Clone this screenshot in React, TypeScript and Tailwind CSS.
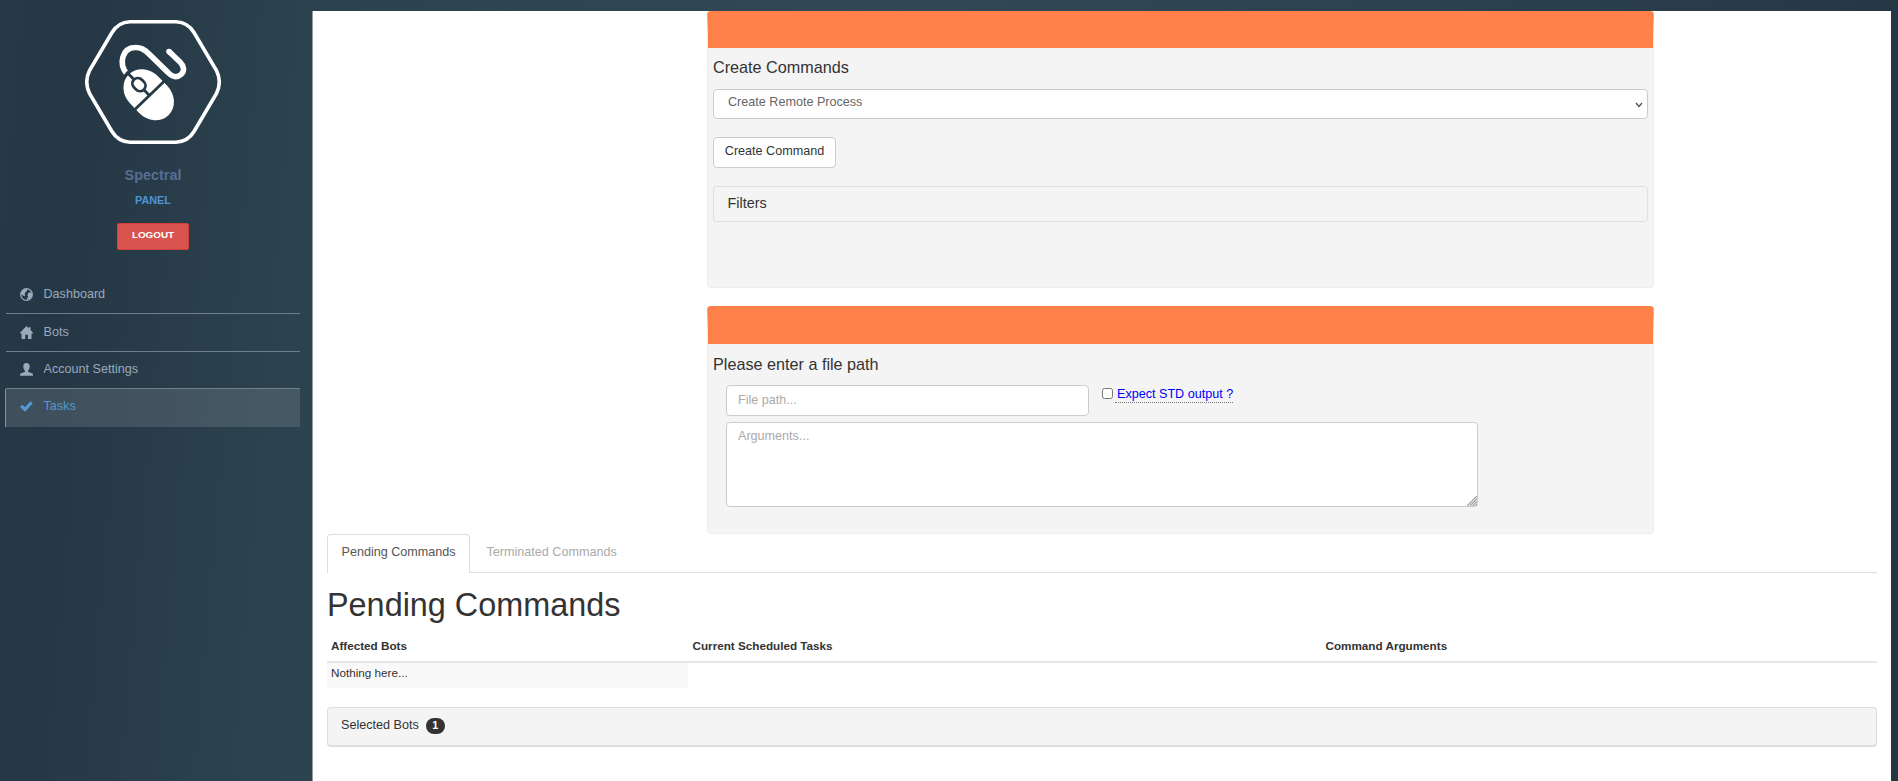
import React from "react";

const GlobeIcon = () => (
  <svg viewBox="0 0 13 13" className="h-[13px] w-[13px]">
    <circle cx="6.5" cy="6.5" r="5.8" fill="none" stroke="currentColor" strokeWidth="1.3" />
    <path fill="currentColor" d="M.8 6 1.500 3.200 4.500.8 7.600.9 6.800 2.200 7.200 3.100 5.400 4.300 4.600 5.700 5.200 7 4.600 8.200 2.500 7.200Z M7.700 5.800 9.200 4.500 10.900 4.300 12.200 6 11.800 8.400 9.900 11 7.400 11.900 6.800 10.600 8.200 9.200 7.600 7.800Z" />
  </svg>
);

const HomeIcon = () => (
  <svg viewBox="0 0 13 13" className="h-[13px] w-[13px]">
    <path fill="currentColor" d="M6.500 0 9 2.500V1.100h1.500V4L13 6.800l-.3.8h-1.200V13H8V8.800H5.200V13H1.500V7.600H.3L0 6.800Z" />
  </svg>
);

const UserIcon = () => (
  <svg viewBox="0 0 13 13" className="h-[13px] w-[13px]">
    <path fill="currentColor" d="M6.500 0C8.700 0 9.700 1.300 9.700 3.300c0 1.900-.8 3.800-1.700 4.600v.9l3.800 1.400c.8.300 1.200.8 1.200 1.500v1.100H0v-1.100c0-.7.4-1.200 1.200-1.500L5 8.800v-.9C4.100 7.100 3.300 5.200 3.300 3.300 3.300 1.300 4.300 0 6.500 0Z" />
  </svg>
);

const CheckIcon = () => (
  <svg viewBox="0 0 13 13" className="h-[13px] w-[13px]">
    <path fill="currentColor" d="M10.400 1.300 12.700 3.400 5.100 11.700 0 6.900 2.200 4.800 5 7.300Z" />
  </svg>
);

const ResizeGrip = () => (
  <svg viewBox="0 0 11 11" className="absolute right-px bottom-px h-[10px] w-[10px]" stroke="#999" strokeWidth="1.2">
    <path d="M0 11 11 0M3 11 11 3M6 11 11 6M9 11 11 9" />
  </svg>
);

const Logo = () => (
  <svg viewBox="0 0 136 124" className="h-[124px] w-[136px]" fill="none" stroke="white">
    <path strokeWidth="3.600" d="M45 1.800H91Q103 2.500 109 12.500L131.500 50.500Q137 62 131.500 73.500L109 111.500Q103 121.500 91 122.200H45Q33 121.500 27 111.500L4.500 73.500Q-1 62 4.500 50.500L27 12.500Q33 2.500 45 1.800Z" />
    <path strokeWidth="5.600" d="M41 53C34 43 37 28 50 27.500C56 27 60 30 63 33L83 52.500C87 57 92 58 96 54.500C100 51 99 46 95 42L84 31.500" />
    <circle cx="84" cy="31.500" r="2.800" fill="white" stroke="none" />
    <g transform="translate(63.700 74.700) rotate(-44)">
      <rect x="-19.500" y="-28.500" width="39" height="57" rx="19.500" ry="22" fill="white" stroke="none" />
      <path stroke="#263946" strokeWidth="2.800" d="M-22 1H22M0-32V1" />
      <rect x="-5.500" y="-21" width="11" height="14" rx="5.500" fill="white" stroke="#263946" strokeWidth="2.800" />
    </g>
  </svg>
);

const navItems = [
  { label: "Dashboard", icon: GlobeIcon, active: false },
  { label: "Bots", icon: HomeIcon, active: false },
  { label: "Account Settings", icon: UserIcon, active: false },
  { label: "Tasks", icon: CheckIcon, active: true },
];

function Sidebar() {
  return (
    <aside className="flex w-[312px] shrink-0 flex-col pt-[20px]">
      <div className="flex w-[306px] flex-col items-center">
        <Logo />
        <div className="mt-[21px] text-[14.4px] leading-[20px] font-bold text-[#566f93]">Spectral</div>
        <div className="mt-[5px] text-[10.8px] leading-[20px] font-bold text-[#4f94d4]">PANEL</div>
        <button className="mt-[13px] h-[27px] w-[72px] rounded-[2px] border border-[#d43f3a] bg-[#d9534f] pb-[2px] text-[9.9px] font-bold text-white">
          LOGOUT
        </button>
      </div>
      <nav className="mt-[26.500px] ml-[5px] w-[295px]">
        {navItems.map(({ label, icon: Icon, active }) => (
          <a
            key={label}
            className={
              active
                ? "flex h-[37.500px] items-center gap-[10.500px] border-l border-[#5a9bd8] bg-white/12 pb-[2px] pl-[14px] text-[#5499d6]"
                : "ml-px flex h-[37.500px] items-center gap-[10.500px] border-b border-[#6f7f8a] pl-[14px] text-[#9aa9bb]"
            }
          >
            <Icon />
            <span className="text-[12.6px]">{label}</span>
          </a>
        ))}
      </nav>
    </aside>
  );
}

function Panel({ title, className, children }: { title: string; className: string; children: React.ReactNode }) {
  return (
    <section
      className={
        "ml-[394px] w-[947px] rounded-[4px] border border-[#ededed] border-t-[#ff8049] bg-[#f4f4f4] px-[5px] " +
        className
      }
    >
      <h4 className="text-[16.2px] leading-[20px]">{title}</h4>
      {children}
    </section>
  );
}

function CommandTable() {
  return (
    <table className="w-full table-fixed border-collapse text-[11.7px]">
      <thead>
        <tr className="h-[34px] border-b-2 border-[#e6e6e6] text-left">
          <th className="w-[361px] pt-[2px] pl-[4px]">Affected Bots</th>
          <th className="w-[633px] pt-[2px] pl-[4.500px]">Current Scheduled Tasks</th>
          <th className="pt-[2px] pl-[4.500px]">Command Arguments</th>
        </tr>
      </thead>
      <tbody>
        <tr className="h-[26px]">
          <td className="bg-[#f9f9f9] pb-[5px] pl-[4px]">Nothing here...</td>
        </tr>
      </tbody>
    </table>
  );
}

export default function App() {
  return (
    <div className="flex h-[781px] w-full overflow-hidden bg-[#2a404d] bg-[linear-gradient(95deg,#263946_0%,#253745_4%,#283b49_9%,#2c434f_16%,#304955_45%,#2c4350_70%,#253643_100%)] font-['Liberation_Sans',Arial,sans-serif] text-[12.6px] text-[#333]">
      <Sidebar />
      <main className="mt-[11px] w-[1579px] border-l border-[#8e9aa1] bg-white">
        <Panel title="Create Commands" className="h-[277px] border-t-[37px] pt-[9px]">
          <div className="relative mt-[12px] h-[30px]">
            <select className="block h-[30px] w-full appearance-none rounded-[4px] border border-[#ccc] bg-white pb-[3px] pl-[14px] text-[12.6px] text-[#666]">
              <option>Create Remote Process</option>
            </select>
            <svg viewBox="0 0 8 6" className="absolute top-[13px] right-[5px] h-[6px] w-[8px]" fill="none" stroke="#555" strokeWidth="1.400">
              <path d="M1 1 4 4.400 7 1" />
            </svg>
          </div>
          <button className="mt-[18px] block h-[31px] w-[123px] rounded-[4px] border border-[#ccc] bg-white pb-[3px] text-[12.6px]">
            Create Command
          </button>
          <div className="mt-[18px] h-[36px] rounded-[3px] border border-[#e0e0e0] pt-[6px] pl-[13.500px] text-[14.4px] leading-[20px]">
            Filters
          </div>
        </Panel>
        <Panel title="Please enter a file path" className="mt-[18px] h-[228px] border-t-[38px] pt-[10px]">
          <div className="mt-[11px] ml-[13px] flex items-start">
            <input
              placeholder="File path..."
              className="h-[31px] w-[363px] rounded-[4px] border border-[#ccc] bg-white px-[11px] pb-[2px] text-[12.6px] placeholder:text-[#aaa]"
            />
            <input type="checkbox" className="mt-[3px] ml-[13px] h-[11px] w-[11px]" />
            <label className="ml-[2px] h-[18px] border-b border-dotted border-[#777] pl-[2px] text-[12.6px] leading-[18px] text-[#0000ff]">
              Expect STD output ?
            </label>
          </div>
          <div className="relative mt-[6px] ml-[13px] w-[752px]">
            <textarea
              placeholder="Arguments..."
              className="block h-[85px] w-full resize-none rounded-[4px] border border-[#ccc] bg-white px-[11px] py-[4px] text-[12.6px] leading-[18px] placeholder:text-[#aaa]"
            />
            <ResizeGrip />
          </div>
        </Panel>
        <div className="mr-[14px] ml-[14px]">
          <div className="flex h-[39px] border-b border-[#ddd]">
            <div className="h-[39px] w-[143px] rounded-t-[4px] border border-b-0 border-[#ddd] bg-white pt-[8px] pl-[13.500px] leading-[18px] text-[#555]">
              Pending Commands
            </div>
            <div className="pt-[9px] pl-[16.500px] leading-[18px] text-[#aaa]">Terminated Commands</div>
          </div>
          <h1 className="pt-[14px] text-[32.4px] leading-[36px]">Pending Commands</h1>
          <div className="h-[5px]" />
          <CommandTable />
          <div className="mt-[19px] flex h-[40px] items-center gap-[7px] rounded-[4px] border border-b-2 border-[#ddd] bg-[#f4f4f4] pb-[2px] pl-[13px]">
            <span>Selected Bots</span>
            <span className="flex h-[16px] w-[19px] items-center justify-center rounded-full bg-[#333] text-[10.8px] leading-none font-bold text-white">
              1
            </span>
          </div>
        </div>
      </main>
    </div>
  );
}
